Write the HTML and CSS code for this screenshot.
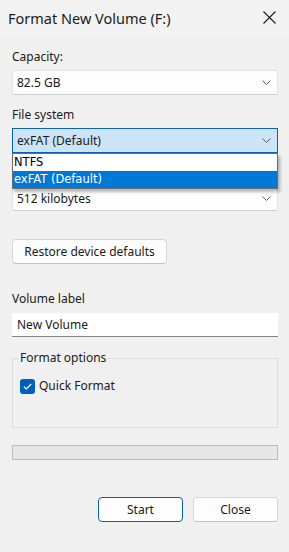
FILE: index.html
```html
<!DOCTYPE html>
<html>
<head>
<meta charset="utf-8">
<link rel="stylesheet" href="styles.css">
</head>
<body>
<div class="window">
  <div class="titlebar">
    <span class="title">Format New Volume (F:)</span>
    <svg class="close-x" width="13" height="13" viewBox="0 0 13 13"><path d="M0.5 0.5 L12.5 12.5 M12.5 0.5 L0.5 12.5" stroke="#1b1b1b" stroke-width="1.1" fill="none"/></svg>
  </div>
  <div class="content">
    <div class="label">Capacity:</div>
    <div class="select">
      <span>82.5 GB</span>
      <svg class="chev" width="9" height="5" viewBox="0 0 9 5"><path d="M0.5 0.5 L4.5 4.5 L8.5 0.5" stroke="#5f5f5f" stroke-width="1" fill="none"/></svg>
    </div>

    <div class="label">File system</div>
    <div class="select focused">
      <span>exFAT (Default)</span>
      <svg class="chev" width="9" height="5" viewBox="0 0 9 5"><path d="M0.5 0.5 L4.5 4.5 L8.5 0.5" stroke="#5f5f5f" stroke-width="1" fill="none"/></svg>
      <div class="droplist">
        <div class="opt">NTFS</div>
        <div class="opt sel">exFAT (Default)</div>
      </div>
    </div>

    <div class="label spacer"></div>
    <div class="select">
      <span>512 kilobytes</span>
      <svg class="chev" width="9" height="5" viewBox="0 0 9 5"><path d="M0.5 0.5 L4.5 4.5 L8.5 0.5" stroke="#5f5f5f" stroke-width="1" fill="none"/></svg>
    </div>

    <div class="restore-row"><button class="btn restore">Restore device defaults</button></div>

    <div class="label vol">Volume label</div>
    <div class="textbox">New Volume</div>

    <fieldset class="group">
      <legend>Format options</legend>
      <div class="check-row">
        <span class="checkbox"><svg width="15" height="15" viewBox="0 0 15 15"><path d="M3.8 7.6 L6.3 10 L11.2 5" stroke="#ffffff" stroke-width="1.2" fill="none"/></svg></span>
        <span>Quick Format</span>
      </div>
    </fieldset>

    <div class="progress"></div>

    <div class="actions">
      <button class="btn act primary">Start</button>
      <button class="btn act">Close</button>
    </div>
  </div>
</div>
</body>
</html>
```

FILE: styles.css
```css
html, body {
  margin: 0;
  padding: 0;
  background: #f0f0f0;
}
body {
  font-family: "Noto Sans", "Open Sans", sans-serif;
  font-size: 12px;
  color: #1a1a1a;
  width: 289px;
  height: 552px;
  overflow: hidden;
}
.window {
  display: flex;
  flex-direction: column;
}
.titlebar {
  height: 36px;
  display: flex;
  align-items: center;
  justify-content: space-between;
  padding: 0 13px 0 8px;
  background: #f2f2f2;
}
.title {
  font-size: 14.5px;
  color: #1a1a1a;
  margin-top: -1px;
}
.close-x {
  display: block;
  margin-top: -1px;
}
.content {
  padding: 13px 11px 0 12px;
  display: flex;
  flex-direction: column;
}
.label {
  height: 16px;
  line-height: 16px;
  margin-bottom: 5px;
}
.select {
  position: relative;
  height: 25px;
  box-sizing: border-box;
  background: #fdfdfd;
  border: 1px solid #e2e2e2;
  border-bottom-color: #cfcfcf;
  border-radius: 2px;
  display: flex;
  align-items: center;
  justify-content: space-between;
  padding: 0 6px 0 4px;
  margin-bottom: 12px;
}
.select span {
  line-height: 16px;
}
.chev {
  display: block;
}
.select.focused {
  background: #cce4f7;
  border-color: #0b63b0;
  border-radius: 0;
}
.droplist {
  position: absolute;
  left: -1px;
  top: 24px;
  width: 266px;
  box-sizing: border-box;
  background: #ffffff;
  border: 1px solid #6c6c6c;
  box-shadow: 2px 3px 3px rgba(0,0,0,0.28);
  z-index: 2;
}
.opt {
  height: 17px;
  line-height: 17px;
  padding-left: 1px;
  color: #000;
  font-family: "DejaVu Sans", "Noto Sans", sans-serif;
  font-size: 11.5px;
}
.opt.sel {
  background: #0078d7;
  color: #ffffff;
}
.restore-row {
  display: flex;
  margin-top: 16px;
}
.btn {
  font-family: "Noto Sans", "Open Sans", sans-serif;
  font-size: 12px;
  color: #1a1a1a;
  background: #fdfdfd;
  border: 1px solid #d6d6d6;
  border-bottom-color: #c2c2c2;
  border-radius: 4px;
  height: 25px;
  box-sizing: border-box;
  padding: 0;
  margin: 0;
}
.restore {
  width: 155px;
}
.label.vol {
  margin-top: 27px;
  margin-bottom: 6px;
}
.textbox {
  height: 24px;
  box-sizing: border-box;
  background: #ffffff;
  border-bottom: 1px solid #868686;
  line-height: 23px;
  padding-left: 5px;
}
.group {
  margin: 13px 0 0 0;
  padding: 12px 7px 33px 7px;
  border: 1px solid #dcdcdc;
  min-width: 0;
}
.group legend {
  padding: 0 1px;
  line-height: 16px;
  margin-left: -1px;
}
.check-row {
  display: flex;
  align-items: center;
  gap: 4px;
  height: 16px;
  line-height: 16px;
}
.checkbox {
  width: 15px;
  height: 15px;
  border-radius: 3px;
  background: #005fb8;
  display: block;
}
.checkbox svg {
  display: block;
}
.progress {
  margin-top: 17px;
  height: 15px;
  box-sizing: border-box;
  background: #e6e6e6;
  border: 1px solid #bcbcbc;
}
.actions {
  display: flex;
  justify-content: flex-end;
  gap: 10px;
  margin-top: 37px;
}
.btn.act {
  width: 85px;
}
.btn.primary {
  border-color: #0a5fb0;
}
```
